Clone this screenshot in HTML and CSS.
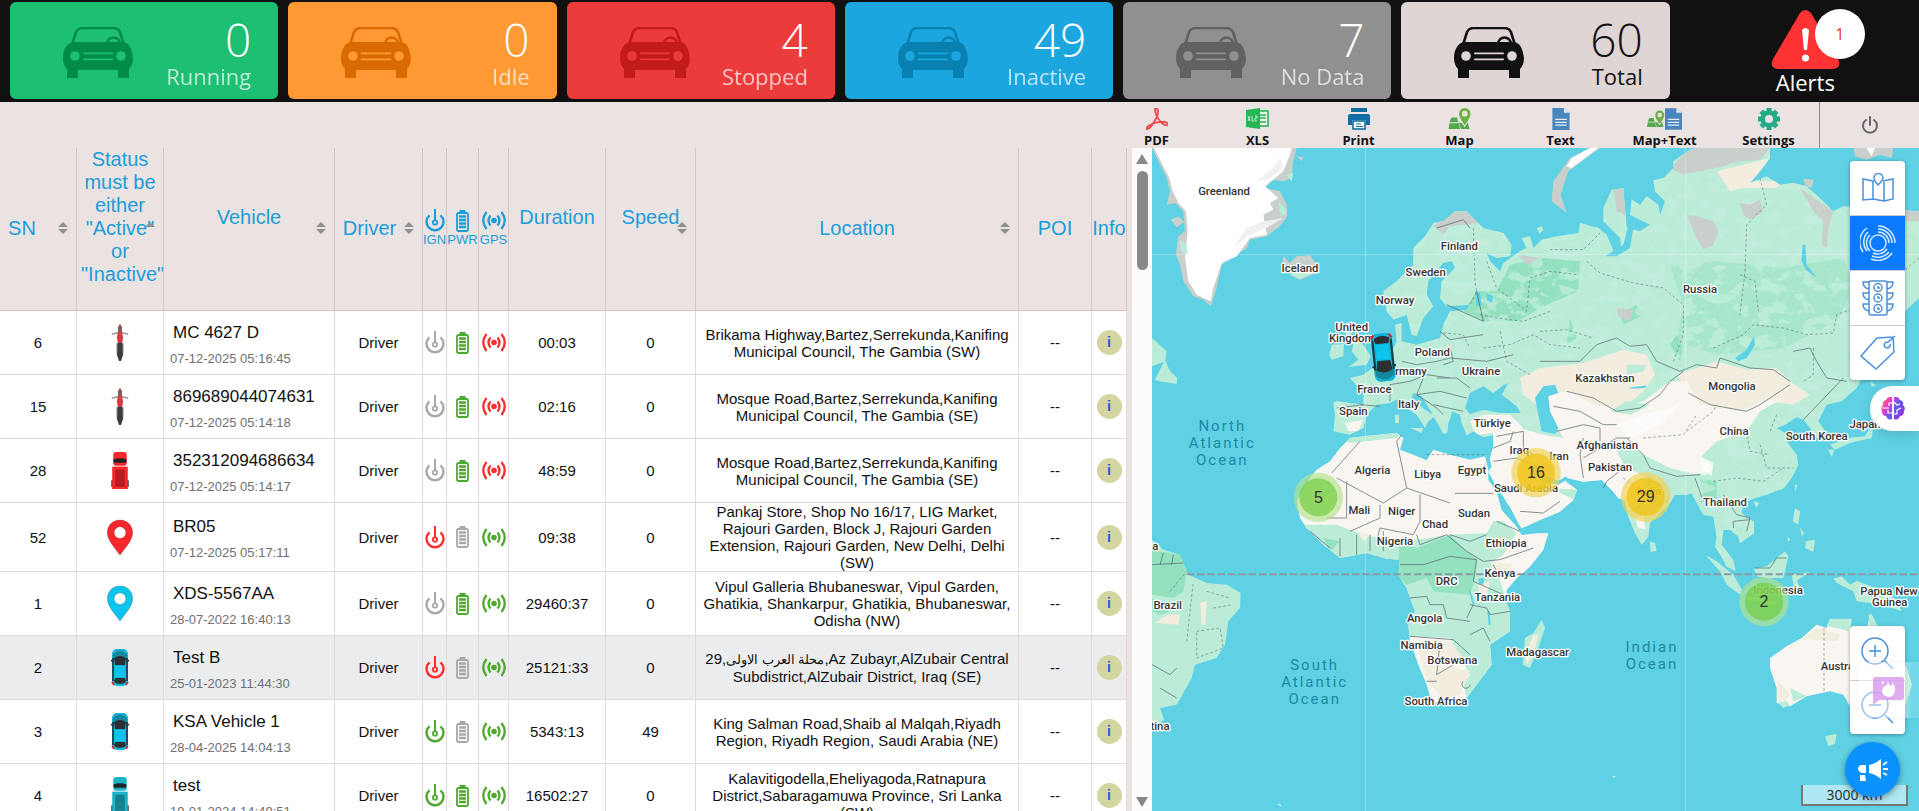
FILE: index.html
```html
<!DOCTYPE html>
<html lang="en">
<head>
<meta charset="utf-8">
<title>Fleet dashboard</title>
<link rel="stylesheet" href="styles.css">
</head>
<body>
<svg class="defs" aria-hidden="true">
  <symbol id="car" viewBox="0 0 70 51">
    <path d="M9 18 13 5Q15 1 20 1H50Q55 1 57 5L61 18" fill="none" stroke="currentColor" stroke-width="2.600"/>
    <path d="M44 17a6.500 6.500 0 0 1 13 0" fill="none" stroke="currentColor" stroke-width="2.400"/>
    <path d="M10 15H60Q65 16 67 20T70 31Q70 38 66 42V51H55V43H15V51H4V42Q0 38 0 31T3 20Q5 16 10 15Z" fill="currentColor"/>
    <g fill="var(--card)"><circle cx="12" cy="29" r="4.800"/><circle cx="58" cy="29" r="4.800"/><rect x="20" y="25.500" width="30" height="1.800" rx=".8"/><rect x="20" y="31.500" width="30" height="1.800" rx=".8"/></g>
  </symbol>
  <symbol id="ign" viewBox="0 0 20 23">
    <path d="M4.500 6.300A8.500 8.500 0 1 0 15.500 6.300" fill="none" stroke="currentColor" stroke-width="2.400"/>
    <path d="M10 0V12" stroke="currentColor" stroke-width="2"/><circle cx="10" cy="13.500" r="2.200" fill="none" stroke="currentColor" stroke-width="1.800"/>
  </symbol>
  <symbol id="pwr" viewBox="0 0 13 22">
    <rect x="3.500" y="0" width="6" height="3" fill="currentColor"/><rect x="1" y="3" width="11" height="18" rx="1.500" fill="none" stroke="currentColor" stroke-width="1.800"/>
    <path d="M3 6.500H10M3 10H10M3 13.500H10M3 17H10" stroke="currentColor" stroke-width="2.400"/>
  </symbol>
  <symbol id="gps" viewBox="0 0 24 19">
    <circle cx="12" cy="9.500" r="2.800" fill="currentColor"/>
    <path d="M8.500 4.500Q4.500 9.500 8.500 14.500M15.500 4.500Q19.500 9.500 15.500 14.500M4.500 1Q-2 9.500 4.500 18M19.500 1Q26 9.500 19.500 18" fill="none" stroke="currentColor" stroke-width="2.300"/>
  </symbol>
  <symbol id="pin" viewBox="0 0 28 38"><path d="M14 1C6 1 1 7 1 14C1 22 9 30 14 37C19 30 27 22 27 14C27 7 22 1 14 1ZM14 8A6 6 0 0 1 14 20A6 6 0 0 1 14 8Z" fill="currentColor" stroke="#0003" fill-rule="evenodd"/></symbol>
  <symbol id="sedan" viewBox="0 0 18 37">
    <rect x="1" y="0" width="16" height="37" rx="5" fill="#12b4d8"/><path d="M2 5Q9-2 16 5V10H2Z" fill="#16879c"/>
    <path d="M0 12 2 11M18 12 16 11M2 9V32M16 9V32" stroke="#1c3a42" stroke-width="1.600"/>
    <path d="M3 9Q9 5 15 9L14 16H4Z" fill="#2c3033"/><rect x="4" y="17" width="10" height="11" fill="#0cc4ee"/><path d="M4 29H14L15 33Q9 37 3 33Z" fill="#2c3033"/>
    <path d="M1 33 3 36M17 33 15 36" stroke="#d22" stroke-width="1.500"/>
  </symbol>
  <symbol id="truck" viewBox="0 0 18 38">
    <rect x="2" y="0" width="14" height="14" rx="3" fill="currentColor"/><path d="M2 8Q9 5 16 8L15 11H3Z" fill="#222"/>
    <path d="M1 29V36M17 29V36" stroke="#444" stroke-width="2"/><rect x="1" y="15" width="16" height="23" fill="currentColor"/><rect x="4" y="18" width="10" height="18" rx="2" fill="#0004"/>
  </symbol>
  <symbol id="moto" viewBox="0 0 18 36">
    <path d="M1 10 9 8 17 10" fill="none" stroke="#999" stroke-width="1.400"/><path d="M9 0Q11 3 11 8L12 13 11 19H7L6 13 7 8Q7 3 9 0Z" fill="#d8393c"/>
    <path d="M7 3 9 0 11 3V8H7Z" fill="#8c5a58"/><path d="M6 19Q9 17 12 19L12 30 10 36H8L6 30Z" fill="#3a3c40"/><path d="M6 20V28M12 20V28" stroke="#999"/>
  </symbol>
  <symbol id="mapico" viewBox="0 0 24 23">
    <path d="M3 10H9L10 15H1ZM1 16H11L12 22H0ZM11 15 14 16 17 20 20 15 22 22H13Z" fill="#55a84c"/>
    <path d="M17 0A6 6 0 0 1 23 6Q23 10 17 18Q11 10 11 6A6 6 0 0 1 17 0ZM17 3A3 3 0 0 0 17 9A3 3 0 0 0 17 3Z" fill="#6cb044" fill-rule="evenodd"/>
  </symbol>
  <symbol id="textico" viewBox="0 0 18 23">
    <path d="M0 0H12L18 5V23H0Z" fill="#4a86bb"/><path d="M12 0V5H18Z" fill="#dfe8f0"/><path d="M3 12H15M3 15H15M3 18H15" stroke="#e6eef5" stroke-width="1.300"/>
  </symbol>
</svg>

<header class="stats">
  <button class="card running"><svg class="car"><use href="#car"/></svg><span class="fig"><b>0</b><span>Running</span></span></button>
  <button class="card idle"><svg class="car"><use href="#car"/></svg><span class="fig"><b>0</b><span>Idle</span></span></button>
  <button class="card stopped"><svg class="car"><use href="#car"/></svg><span class="fig"><b>4</b><span>Stopped</span></span></button>
  <button class="card inactive"><svg class="car"><use href="#car"/></svg><span class="fig"><b>49</b><span>Inactive</span></span></button>
  <button class="card nodata"><svg class="car"><use href="#car"/></svg><span class="fig"><b>7</b><span>No Data</span></span></button>
  <button class="card total"><svg class="car"><use href="#car"/></svg><span class="fig"><b>60</b><span>Total</span></span></button>
  <button class="alerts">
    <span class="alert-icon">
      <svg width="69" height="59" viewBox="0 0 69 59"><path d="M29 3Q34-3 40 3L67 49Q71 58 62 59H7Q-2 58 2 49Z" fill="#f33"/><path d="M31 20Q34 16 38 20L36 40H33Z" fill="#fff"/><circle cx="34.500" cy="48" r="3.500" fill="#fff"/></svg>
      <span class="badge">1</span>
    </span>
    <span>Alerts</span>
  </button>
</header>

<nav class="tools">
  <button><svg width="22" height="22" viewBox="0 0 22 22"><path d="M9 1Q12 0 12 3Q12 8 8 14Q4 21 1 21Q0 19 4 17Q11 13 19 14Q23 15 21 17Q18 18 14 13Q9 7 9 1Z" fill="none" stroke="#f0484a" stroke-width="1.800"/></svg>PDF</button>
  <button><svg width="24" height="22" viewBox="0 0 24 22"><rect x="12" y="3" width="10" height="15" fill="#e9f6ec" stroke="#2bb35a" stroke-width="1.600"/><path d="M14 7H20M14 10H20M14 14H20" stroke="#2bb35a" stroke-width="1.600"/><path d="M0 2 14 0V21L0 19Z" fill="#27b556"/><path d="M2 8 4 13M4 8 2 13M6 8V13H8M9 8H11V10H9V13H11" stroke="#bfe8cc" stroke-width="1" fill="none"/></svg>XLS</button>
  <button><svg width="22" height="22" viewBox="0 0 22 22"><path d="M3 0H19V4H3Z" fill="#0d6fa3"/><path d="M2 6H20Q22 6 22 8V17H18V12H4V17H0V8Q0 6 2 6Z" fill="#0d6fa3"/><rect x="5" y="13" width="12" height="8" fill="#fff" stroke="#0d6fa3" stroke-width="1.600"/><path d="M8 16H13M8 18.500H15" stroke="#0d6fa3"/></svg>Print</button>
  <button><svg width="24" height="22"><use href="#mapico"/></svg>Map</button>
  <button><svg width="18" height="22"><use href="#textico"/></svg>Text</button>
  <button class="wide"><span class="pair"><svg width="18" height="22"><use href="#mapico"/></svg><svg width="17" height="22"><use href="#textico"/></svg></span>Map+Text</button>
  <button><svg width="22" height="22" viewBox="0 0 22 22"><path d="M11 2.500V19.500M2.500 11H19.500M5 5 17 17M17 5 5 17" stroke="#22ab86" stroke-width="5" stroke-linecap="square"/><circle cx="11" cy="11" r="8.500" fill="#22ab86"/><circle cx="11" cy="11" r="4" fill="#ebe3e2"/></svg>Settings</button>
  <button class="power" aria-label="Log out"><svg width="18" height="19" viewBox="0 0 18 19"><path d="M5 4A7 7 0 1 0 13 4" fill="none" stroke="#666" stroke-width="2" stroke-linecap="round"/><path d="M9 1V9" stroke="#666" stroke-width="2" stroke-linecap="round"/></svg></button>
</nav>

<main class="main">
  <section class="list">
    <div class="list-body">
      <table>
        <colgroup><col class="c-sn"><col class="c-status"><col class="c-vehicle"><col class="c-driver"><col class="c-ign"><col class="c-pwr"><col class="c-gps"><col class="c-dur"><col class="c-speed"><col><col class="c-poi"><col class="c-info"></colgroup>
        <thead>
          <tr>
            <th class="sort h-sn">SN</th>
            <th class="sort up raised h-status">Status must be either "Active" or "Inactive"</th>
            <th class="sort raised">Vehicle</th>
            <th class="sort h-driver">Driver</th>
            <th class="mini"><svg class="ign"><use href="#ign"/></svg><span>IGN</span></th>
            <th class="mini"><svg class="pwr"><use href="#pwr"/></svg><span>PWR</span></th>
            <th class="mini"><svg class="gps"><use href="#gps"/></svg><span>GPS</span></th>
            <th class="raised">Duration</th>
            <th class="sort raised">Speed</th>
            <th class="sort">Location</th>
            <th>POI</th>
            <th>Info</th>
          </tr>
        </thead>
        <tbody>
          <tr><td>6</td><td><svg class="veh"><use href="#moto"/></svg></td><td class="name"><b>MC 4627 D</b><small>07-12-2025 05:16:45</small></td><td>Driver</td><td class="off"><svg class="ign"><use href="#ign"/></svg></td><td class="on"><svg class="pwr"><use href="#pwr"/></svg></td><td class="bad"><svg class="gps"><use href="#gps"/></svg></td><td>00:03</td><td>0</td><td>Brikama Highway,Bartez,Serrekunda,Kanifing Municipal Council, The Gambia (SW)</td><td>--</td><td><button class="info">i</button></td></tr>
          <tr><td>15</td><td><svg class="veh"><use href="#moto"/></svg></td><td class="name"><b>869689044074631</b><small>07-12-2025 05:14:18</small></td><td>Driver</td><td class="off"><svg class="ign"><use href="#ign"/></svg></td><td class="on"><svg class="pwr"><use href="#pwr"/></svg></td><td class="bad"><svg class="gps"><use href="#gps"/></svg></td><td>02:16</td><td>0</td><td>Mosque Road,Bartez,Serrekunda,Kanifing Municipal Council, The Gambia (SE)</td><td>--</td><td><button class="info">i</button></td></tr>
          <tr><td>28</td><td class="red"><svg class="veh"><use href="#truck"/></svg></td><td class="name"><b>352312094686634</b><small>07-12-2025 05:14:17</small></td><td>Driver</td><td class="off"><svg class="ign"><use href="#ign"/></svg></td><td class="on"><svg class="pwr"><use href="#pwr"/></svg></td><td class="bad"><svg class="gps"><use href="#gps"/></svg></td><td>48:59</td><td>0</td><td>Mosque Road,Bartez,Serrekunda,Kanifing Municipal Council, The Gambia (SE)</td><td>--</td><td><button class="info">i</button></td></tr>
          <tr><td>52</td><td class="red"><svg class="veh"><use href="#pin"/></svg></td><td class="name"><b>BR05</b><small>07-12-2025 05:17:11</small></td><td>Driver</td><td class="bad"><svg class="ign"><use href="#ign"/></svg></td><td class="off"><svg class="pwr"><use href="#pwr"/></svg></td><td class="on"><svg class="gps"><use href="#gps"/></svg></td><td>09:38</td><td>0</td><td>Pankaj Store, Shop No 16/17, LIG Market, Rajouri Garden, Block J, Rajouri Garden Extension, Rajouri Garden, New Delhi, Delhi (SW)</td><td>--</td><td><button class="info">i</button></td></tr>
          <tr><td>1</td><td class="cyan"><svg class="veh"><use href="#pin"/></svg></td><td class="name"><b>XDS-5567AA</b><small>28-07-2022 16:40:13</small></td><td>Driver</td><td class="off"><svg class="ign"><use href="#ign"/></svg></td><td class="on"><svg class="pwr"><use href="#pwr"/></svg></td><td class="on"><svg class="gps"><use href="#gps"/></svg></td><td>29460:37</td><td>0</td><td>Vipul Galleria Bhubaneswar, Vipul Garden, Ghatikia, Shankarpur, Ghatikia, Bhubaneswar, Odisha (NW)</td><td>--</td><td><button class="info">i</button></td></tr>
          <tr class="hover"><td>2</td><td><svg class="veh"><use href="#sedan"/></svg></td><td class="name"><b>Test B</b><small>25-01-2023 11:44:30</small></td><td>Driver</td><td class="bad"><svg class="ign"><use href="#ign"/></svg></td><td class="off"><svg class="pwr"><use href="#pwr"/></svg></td><td class="on"><svg class="gps"><use href="#gps"/></svg></td><td>25121:33</td><td>0</td><td>29,<bdi class="arabic" lang="ar">محلة العرب الاولى</bdi>,Az Zubayr,AlZubair Central Subdistrict,AlZubair District, Iraq (SE)</td><td>--</td><td><button class="info">i</button></td></tr>
          <tr><td>3</td><td><svg class="veh"><use href="#sedan"/></svg></td><td class="name"><b>KSA Vehicle 1</b><small>28-04-2025 14:04:13</small></td><td>Driver</td><td class="on"><svg class="ign"><use href="#ign"/></svg></td><td class="off"><svg class="pwr"><use href="#pwr"/></svg></td><td class="on"><svg class="gps"><use href="#gps"/></svg></td><td>5343:13</td><td>49</td><td>King Salman Road,Shaib al Malqah,Riyadh Region, Riyadh Region, Saudi Arabia (NE)</td><td>--</td><td><button class="info">i</button></td></tr>
          <tr><td>4</td><td class="teal"><svg class="veh"><use href="#truck"/></svg></td><td class="name"><b>test</b><small>19-01-2024 14:49:51</small></td><td>Driver</td><td class="on"><svg class="ign"><use href="#ign"/></svg></td><td class="on"><svg class="pwr"><use href="#pwr"/></svg></td><td class="on"><svg class="gps"><use href="#gps"/></svg></td><td>16502:27</td><td>0</td><td>Kalavitigodella,Eheliyagoda,Ratnapura District,Sabaragamuwa Province, Sri Lanka (SW)</td><td>--</td><td><button class="info">i</button></td></tr>
        </tbody>
      </table>
    </div>
    <div class="scrollbar"><i class="arrow-up"></i><i class="thumb"></i><i class="arrow-down"></i></div>
  </section>

  <section class="map">
    <svg class="world" viewBox="6 0 2301 1989" preserveAspectRatio="xMidYMid slice">
      <defs>
        <clipPath id="eurasia"><path d="M700 430 740 400 790 350 790 300 825 265 850 225 880 220 915 190 950 190 975 215 1000 240 1060 255 1085 290 1080 325 1040 330 1010 315 1020 340 1050 370 1060 345 1110 310 1130 300 1115 270 1140 265 1150 300 1175 275 1220 265 1285 255 1290 225 1345 240 1370 260 1385 295 1395 320 1415 310 1410 270 1360 220 1360 180 1385 125 1420 120 1425 180 1430 240 1470 250 1500 230 1440 200 1445 155 1470 170 1490 145 1525 170 1530 200 1545 160 1515 130 1510 97 1540 90 1570 60 1570 40 1620 5 1640 0 1860 0 1860 30 1830 70 1800 105 1850 85 1890 110 1930 105 1970 115 2020 160 2050 190 2080 175 2307 190 2307 450 2265 490 2200 540 2130 700 2120 720 2075 760 2030 770 2005 820 2025 850 2000 870 1980 840 1960 815 1940 808 1905 830 1880 840 1915 860 1910 880 1940 920 1945 950 1925 990 1900 1022 1850 1040 1810 1052 1780 1066 1775 1096 1812 1121 1812 1156 1770 1186 1765 1166 1740 1146 1720 1146 1715 1190 1750 1236 1757 1270 1730 1256 1715 1226 1695 1196 1700 1166 1690 1106 1660 1101 1640 1066 1625 1036 1610 1041 1575 1041 1560 1066 1520 1106 1500 1126 1495 1166 1475 1191 1455 1156 1435 1106 1425 1056 1405 1051 1390 1031 1355 996 1300 1001 1255 991 1240 986 1248 1001 1282 1026 1270 1056 1230 1091 1170 1116 1115 1141 1105 1126 1085 1086 1060 1046 1040 1016 1015 971 1025 956 1020 931 1030 896 1030 862 1000 868 970 850 950 862 935 825 930 800 905 800 895 825 892 855 880 858 865 830 840 785 815 745 790 735 785 752 825 785 855 805 835 820 825 840 800 800 765 775 748 750 720 765 680 770 650 800 640 840 600 860 550 850 555 800 550 765 560 760 640 770 640 735 600 690 640 680 680 650 730 600 740 580 735 530 755 525 755 580 800 590 870 570 880 530 900 490 950 485 960 470 890 475 870 450 875 400 915 360 905 340 880 345 835 400 830 440 850 475 820 510 800 565 785 560 770 500 730 515 710 490Z"/></clipPath>
        <clipPath id="africa"><path d="M600 870 640 865 740 855 760 870 750 905 790 920 830 937 850 905 900 920 960 935 1005 925 1015 965 1015 996 1040 1031 1055 1086 1100 1136 1115 1161 1160 1156 1195 1156 1180 1206 1140 1256 1100 1291 1070 1326 1070 1366 1080 1390 1080 1450 1020 1490 1025 1550 995 1590 950 1650 900 1670 845 1662 830 1610 805 1550 780 1480 775 1430 795 1390 770 1320 745 1280 750 1235 710 1232 650 1215 570 1230 520 1190 470 1140 450 1110 440 1060 480 990 500 965 540 940 570 900Z"/></clipPath>
        <filter id="mottle" x="0" y="0" width="100%" height="100%"><feTurbulence type="fractalNoise" baseFrequency=".022 .03" numOctaves="3" seed="8"/><feColorMatrix values="0 0 0 0 .55  0 0 0 0 .87  0 0 0 0 .73  9 0 0 0 -4.600"/></filter>
      </defs>
      <rect x="6" width="2301" height="1989" fill="#5fd1e5"/>
      <!-- Arctic islands -->
      <path class="grey" d="M6 0 50 90 60 130 50 170 75 165 100 190 105 250 85 265 78 320 90 350 100 400 130 445 160 455 183 475 200 420 215 350 290 300 300 275 350 265 390 235 412 205 410 170 390 130 345 120 370 95 400 100 425 90 430 40 440 0Z"/>
      <path class="snow" d="M12 0 58 90 68 130 85 165 108 190 113 250 105 330 115 400 140 440 182 460 190 420 215 345 260 325 300 270 350 260 340 200 370 185 360 165 385 150 345 115 400 70 420 20 425 0Z"/>
      <path class="green" d="M90 275 110 290 112 320 92 310ZM385 160 410 185 405 205 388 190ZM410 80 430 75 425 100Z"/>
      <path class="shade" d="M320 100 370 60 390 30 400 60 360 90ZM250 300 300 260 350 240 400 210 340 220 290 240Z"/>
      <path class="grey" d="M62 215 85 205 102 222 80 238ZM400 325 420 345 440 325 480 322 505 355 500 375 450 395 420 380 430 365 395 355ZM1320 0 1260 30 1210 100 1205 160 1250 195 1232 140 1255 70 1350 0ZM2110 0H2230L2225 30 2190 20 2150 35 2115 25ZM1960 92 1992 95 1985 120 1965 112ZM440 25l20 3-5 12Z"/>
      <path class="snow" d="M1320 0 1265 30 1250 55 1265 60 1345 0ZM2150 0 2165 25 2175 0Z"/>
      <path class="green" d="M430 370 500 372 450 393 420 380ZM1335 235l18 10-8 8ZM1160 240l15-5 5 12-12 10Z"/>
      <!-- Europe and Asia -->
      <g clip-path="url(#eurasia)">
        <rect class="green" width="2307" height="1300"/>
        <path class="deep" d="M1080 350 1180 330 1290 340 1285 430 1190 470 1100 520 1000 520 940 490 980 430 1040 430ZM1580 560 1600 600 1590 640 1560 590ZM1260 510 1280 570 1250 590ZM1410 500 1460 470 1480 500 1420 530ZM1650 990 1700 1000 1700 1060 1660 1050Z"/>
        <path class="deep" opacity=".45" d="M1560 350 1700 340 1900 360 2080 330 2110 420 2060 520 1900 600 1700 620 1580 580 1600 470Z"/>
        <rect width="2307" height="1300" filter="url(#mottle)" opacity=".7"/>
        <path class="grey" d="M1560 60 1620 0H1860L1830 35 1760 40 1720 55 1600 80ZM1610 200 1640 205 1690 220 1705 250 1690 290 1660 305 1640 270ZM1390 120 1425 120 1425 200 1400 190ZM1770 165 1800 170 1830 155 1840 190 1800 215 1780 200ZM1950 120 1990 150 2050 190 2035 240 2030 300 2015 290 2020 220 1990 190ZM2100 170 2307 190 2307 220 2120 220ZM1400 480 1450 485 1440 520 1405 505ZM1105 320 1170 330 1130 350ZM850 235 915 190 950 190 990 225 900 235 880 260Z"/>
        <path class="tan" d="M1700 70 1860 30 1820 100 1900 100 1880 120 1780 120 1740 130ZM1110 690 1170 660 1300 645 1420 605 1490 620 1515 680 1480 730 1420 780 1300 800 1200 800 1120 740ZM1580 680 1700 640 1790 665 1880 660 1920 700 1980 740 1930 770 1850 760 1770 790 1650 780Z"/>
        <path class="sand" d="M1190 740 1260 730 1330 770 1400 780 1480 760 1560 700 1610 700 1650 770 1770 790 1840 760 1900 750 1830 790 1790 850 1700 880 1650 930 1690 960 1660 985 1560 960 1480 920 1430 880 1400 900 1420 950 1480 985 1500 1050 1440 1090 1350 1030 1200 1020 1280 1060 1100 1180 1000 960 1030 855 1110 840 1180 860 1240 870 1200 800ZM960 820 1000 800 1080 800 1120 840 980 862ZM585 825 640 815 625 850 595 850ZM1455 1110 1480 1100 1485 1145 1465 1140Z"/>
        <path class="snow" d="M1650 925 1690 945 1685 985 1655 965ZM1400 830 1480 800 1560 780 1600 760 1530 830 1440 870Z" opacity=".7"/>
        <path class="green" d="M1400 905 1430 940 1550 990 1650 975 1680 990 1600 1000 1500 985 1410 930ZM1380 790 1430 760 1500 770 1440 800ZM1430 650 1490 650 1480 670 1430 680ZM1980 590 2000 630 1950 700 1930 640Z"/>
      </g>
      <g class="sea">
        <path d="M945 780 960 735 1000 715 1030 735 1060 712 1075 705 1055 740 1100 775 1112 795 1050 795 1000 785 960 798Z"/>
        <path d="M1155 750 1180 715 1215 710 1225 735 1195 745 1200 790 1225 840 1215 858 1175 850 1165 800Z"/>
        <path d="M1755 630 1790 605 1812 565 1815 590 1790 630 1765 640Z"/>
        <path d="M1158 950 1190 985 1225 998 1250 985 1252 994 1225 1010 1180 1005 1140 960Z"/>
        <path d="M905 790 930 800 935 850 912 850 905 820ZM1365 325 1420 290 1435 230 1450 240 1440 300 1400 325ZM1435 720 1490 712 1485 720 1445 722ZM975 430l15 5 5 35-15 5ZM1010 435l20 10-5 20-15-10ZM1958 290l8 0 4 60 30 38-30-20-16-30Z"/>
      </g>
      <!-- British Isles and small European islands -->
      <path class="green" d="M605 520 615 545 600 560 640 590 662 625 650 650 595 657 625 635 605 610 610 590 590 570 580 530ZM545 590 582 588 580 625 545 635 538 620ZM735 800h12v25h-12ZM780 840 820 840 815 855ZM6 570 50 610 45 640 6 655ZM15 695 45 635 60 670 82 690 80 708 30 700Z"/>
      <!-- Africa -->
      <g clip-path="url(#africa)">
        <rect class="sand" x="430" y="840" width="800" height="840"/>
        <path class="green" d="M460 1130 560 1130 650 1165 800 1175 900 1160 1010 1155 1030 1120 1060 1120 1100 1156 1060 1220 1030 1240 1060 1330 1080 1390 1080 1450 1020 1490 1025 1550 995 1590 950 1650 940 1610 960 1580 920 1510 900 1470 780 1465 740 1400 740 1250 440 1250ZM540 855 760 850 740 870 600 885Z"/>
        <path class="deep" d="M750 1180 800 1200 900 1160 950 1210 980 1230 975 1290 960 1340 850 1330 830 1290 770 1310 740 1280ZM520 1170 570 1180 540 1210Z"/>
        <path class="tan" d="M800 1480 900 1480 940 1530 880 1550 960 1570 930 1640 880 1650 830 1600ZM620 1150 660 1160 640 1180ZM1020 1240 1090 1250 1040 1290ZM985 1310 1020 1300 1010 1340 985 1345Z"/>
      </g>
      <path class="sea" d="M985 1292 1003 1290 1000 1310 988 1308ZM958 1330l4 0 12 40-6 0ZM1012 1390l6 0 4 42-6 0Z"/>
      <!-- South America, Madagascar, Oceania -->
      <path class="green" d="M6 1175 40 1205 90 1220 115 1280 170 1305 230 1310 272 1335 270 1380 235 1420 225 1490 200 1530 135 1550 125 1590 80 1670 30 1680 42 1715 30 1725 6 1735ZM1175 1415 1185 1440 1165 1500 1140 1560 1118 1550 1125 1470 1150 1455ZM2025 1765l10 30 20-8 5-30Z"/>
      <path class="deep" d="M6 1205 90 1220 110 1270 100 1330 70 1350 6 1340ZM6 1350 60 1390 30 1400 6 1390Z"/>
      <path class="tan" d="M1150 1460 1165 1460 1150 1520 1130 1550 1125 1520ZM15 1425 50 1400 90 1400 85 1430ZM150 1365 170 1360 165 1430 155 1430Z"/>
      <path class="green" d="M1665 1220 1700 1240 1750 1280 1776 1325 1770 1340 1730 1310 1710 1270ZM1812 1262 1850 1255 1905 1210 1915 1225 1900 1290 1850 1290 1820 1285ZM1790 1345 1880 1362 1870 1370 1795 1355ZM1925 1280 1980 1272 1940 1298 1955 1330 1935 1335ZM2050 1292 2075 1285 2100 1310 2120 1298 2190 1325 2240 1355 2255 1390 2200 1370 2120 1360 2110 1330 2060 1305ZM1935 1080 1950 1090 1945 1130 1928 1120ZM1968 1180 1995 1175 1990 1212 1965 1200ZM1950 1140l12 15-6 12ZM1912 1165l10 10-8 5ZM1935 1010 1942 1012 1936 1032ZM1810 1060l18 5-8 14ZM1500 1180 1515 1185 1520 1208 1502 1212ZM2040 890 2090 870 2145 865 2165 830 2160 790 2175 800 2165 870 2100 885 2055 905ZM2035 905l18 0-8 22ZM2160 700 2178 712 2165 716ZM380 1968l10-2 6 12ZM1385 1884l14 0-6 6Z"/>
      <path class="sand" d="M1955 1470 2000 1430 2030 1440 2040 1415 2105 1415 2100 1440 2145 1470 2160 1400 2180 1430 2230 1510 2270 1560 2285 1610 2250 1720 2170 1710 2100 1675 2080 1640 2040 1630 1970 1645 1920 1675 1880 1665 1880 1620 1860 1560 1860 1530 1910 1495Z"/>
      <path class="green" d="M2030 1435 2040 1412 2105 1412 2095 1450 2060 1440ZM2155 1400 2165 1398 2190 1450 2160 1440ZM1885 1665 1900 1650 1920 1672 1900 1680ZM1920 1620 1970 1645 1930 1660ZM2265 1550 2285 1610 2250 1720 2262 1610Z"/>
      <path class="tan" d="M1955 1475 2000 1440 2070 1460 2060 1480 1990 1475ZM1885 1600 1920 1640 1900 1665 1880 1650Z"/>
      <!-- Borders -->
      <g class="dashed">
        <path d="M970 240 975 400 980 430 960 470M1010 340 1040 420 1080 450 1130 490 1140 390 1200 370 1285 380M1200 305 1300 305 1350 255M1310 340 1350 375 1450 405 1540 420 1600 470 1600 560 1570 640M1830 90 1850 170 1790 230 1785 370 1770 500M1770 380 1815 400 1825 490M1690 600 1780 560 1810 530 1900 540 1970 560 2050 555 2060 500 2140 470 2307 330M1170 550 1250 545 1330 570M1610 850 1690 790 1700 770M1990 600 1990 680 1960 700M1830 890 1850 960 1930 960M1790 850 1800 910 1860 920M1880 800 1860 850M1480 870 1600 860 1640 800M990 500 1040 510 1120 520 1200 490M1000 600 1080 590 1150 560 1200 590 1290 600M1050 550 1070 640 1140 680M880 555 940 560 960 600M1690 1000 1760 990 1840 1000 1900 960M1420 990 1500 1050 1440 1090M1460 1090 1550 1060M830 920 1010 920M110 1480 130 1300M60 1330 110 1270M140 1450 210 1440 220 1500 140 1530ZM170 1330 240 1350M190 1380 250 1370M2022 1440V1630"/>
      </g>
      <g class="border">
        <path d="M860 240 940 215 960 240M890 470 1000 520 980 430M870 550 900 575 1000 560M900 600 910 640 880 650M755 640 800 650 860 640 900 630 1010 640 1090 620M860 690 920 690 960 720M720 710 780 700 830 680 900 690M800 740 870 730 950 750M850 770 940 790M820 690 800 740 860 780 880 800M1170 640 1290 640 1340 590 1400 570 1440 595 1490 590 1520 640 1590 670 1640 650 1700 660 1710 630 1800 660 1870 665 1920 700M1600 670 1560 700 1530 740M1615 735 1680 770 1790 790 1830 770 1920 710M1930 610 1980 600 2000 640 2030 690 2090 700M1960 815 2080 690M1210 775 1290 790 1360 830 1400 830M1250 730 1330 750 1400 790 1470 780 1530 740M1220 850 1300 830 1350 840 1350 880M1300 870 1290 920 1300 990M1300 930 1400 870 1440 870M1430 870 1480 920 1500 960 1580 985 1650 980M1360 1020 1370 1000 1420 960M1635 990 1660 1060M1040 865 1120 850 1120 900 1150 920M1030 900 1080 880 1090 850M1030 940 1100 930 1200 970M1110 1090 1180 1095 1230 1060M640 770 560 780M630 770 690 775M720 710 720 760"/>
        <path d="M545 975 630 880M560 990 700 1065 770 1020 740 880 755 860M770 1020 900 1065M915 1036H1030M690 1070 690 1110 600 1150M530 1110H590V1000M810 1040 810 1120 790 1160 690 1140 680 1180M800 1160 810 1190 890 1160 950 1210 1000 1240 1050 1235 1150 1200M750 1250 820 1250 900 1225 980 1235 970 1300 1060 1340M1030 1250 1050 1290M900 1160 960 1180 1010 1160M1040 1120 1110 1150M570 1170 570 1225M620 1160 620 1220M660 1160 660 1210M700 1150 700 1210M480 1150 540 1200M780 1350 830 1345 840 1370 880 1370 890 1410 960 1420M960 1370 1010 1380 1020 1400 1080 1390M780 1465 910 1475 960 1520M960 1460 1000 1440 1020 1480M870 1480 860 1580 910 1550M830 1600 860 1600M970 1370 950 1410M6 1250 100 1245M40 1215 30 1250M70 1220 65 1250M6 1550 60 1580 80 1560M30 1620 80 1650M1720 1040 1760 1100 1800 1110 1790 1150M1750 1140 1750 1120 1800 1115M1815 1260 1860 1260 1880 1230 1910 1230M940 1600a12 12 0 1 0 20 10"/>
      </g>
      <path d="M646 0V1989M1606 0V1989M6 320H2307" stroke="#fff" stroke-opacity=".3" stroke-width="3"/>
      <path d="M110 1279H2307" stroke="#8b9aa8" stroke-width="6" stroke-dasharray="22 9"/>
      <g class="ocean">
        <text x="217" y="849">North</text><text x="217" y="901">Atlantic</text><text x="217" y="951">Ocean</text>
        <text x="494" y="1565">South</text><text x="494" y="1617">Atlantic</text><text x="494" y="1667">Ocean</text>
        <text x="1506" y="1513">Indian</text><text x="1506" y="1563">Ocean</text>
      </g>
      <g class="country">
        <text x="222" y="140">Greenland</text><text x="450" y="373">Iceland</text><text x="928" y="305">Finland</text><text x="827" y="384">Sweden</text><text x="735" y="467">Norway</text><text x="605" y="549">United</text><text x="605" y="583">Kingdom</text><text x="847" y="624">Poland</text><text x="762" y="680">Germany</text><text x="993" y="680">Ukraine</text><text x="673" y="736">France</text><text x="776" y="779">Italy</text><text x="610" y="801">Spain</text><text x="1027" y="838">Türkiye</text><text x="1108" y="917">Iraq</text><text x="667" y="977">Algeria</text><text x="833" y="990">Libya</text><text x="966" y="977">Egypt</text>
        <text x="1650" y="436">Russia</text><text x="1365" y="703">Kazakhstan</text><text x="1746" y="726">Mongolia</text><text x="1752" y="861">China</text><text x="2000" y="875">South Korea</text><text x="2145" y="839">Japan</text><text x="1372" y="902">Afghanistan</text><text x="1227" y="936">Iran</text><text x="1380" y="969">Pakistan</text><text x="1128" y="1032">Saudi Arabia</text><text x="1497" y="1040">India</text><text x="1725" y="1074">Thailand</text><text x="1884" y="1337">Indonesia</text><text x="2217" y="1341">Papua New</text><text x="2219" y="1375">Guinea</text><text x="2080" y="1566">Australia</text>
        <text x="628" y="1098">Mali</text><text x="755" y="1101">Niger</text><text x="855" y="1141">Chad</text><text x="972" y="1107">Sudan</text><text x="735" y="1190">Nigeria</text><text x="1068" y="1198">Ethiopia</text><text x="1050" y="1288">Kenya</text><text x="890" y="1310">DRC</text><text x="1042" y="1359">Tanzania</text><text x="824" y="1423">Angola</text><text x="815" y="1502">Namibia</text><text x="907" y="1547">Botswana</text><text x="858" y="1671">South Africa</text><text x="1163" y="1525">Madagascar</text><text x="53" y="1382">Brazil</text><text x="16" y="1207">a</text><text x="30" y="1746">tina</text>
      </g>
      <use href="#sedan" x="-36" y="-73" width="72" height="146" transform="translate(700 628) rotate(174)"/>
      <g class="cluster green-c"><circle cx="505" cy="1048" r="74"/><circle cx="505" cy="1048" r="57"/><text x="505" y="1064">5</text></g>
      <g class="cluster green-c"><circle cx="1842" cy="1361" r="74"/><circle cx="1842" cy="1361" r="57"/><text x="1842" y="1377">2</text></g>
      <g class="cluster yellow-c"><circle cx="1158" cy="974" r="74"/><circle cx="1158" cy="974" r="57"/><text x="1158" y="990">16</text></g>
      <g class="cluster yellow-c"><circle cx="1487" cy="1047" r="74"/><circle cx="1487" cy="1047" r="57"/><text x="1487" y="1063">29</text></g>
    </svg>

    <div class="panel layers">
      <button aria-label="Map type"><svg width="32" height="30" viewBox="0 0 32 30"><path d="M12 9 11 8 1 6V27L11 26 22 28 31 26V6L21 8M11 9V26M22 9V28M16 12Q12 7 12 5A4.500 4.500 0 0 1 21 5Q21 7 16 12Z"/></svg></button>
      <button class="active" aria-label="Clusters"><svg width="36" height="36" viewBox="0 0 36 36"><circle cx="18" cy="18" r="8"/><path d="M18 7A11 11 0 0 1 29 18M18 4A14 14 0 0 1 32 18M18 1A17 17 0 0 1 35 18M10 26A11 11 0 0 1 10 10M7 26A14 14 0 0 1 8 7M3 27A17 17 0 0 1 7 3M27 24A11 11 0 0 1 13 28M29 27A14 14 0 0 1 12 31M32 28A17 17 0 0 1 11 34"/></svg></button>
      <button aria-label="Traffic"><svg width="32" height="36" viewBox="0 0 32 36"><rect x="7" y="1" width="18" height="34" rx="2"/><circle cx="16" cy="7.500" r="4"/><circle cx="16" cy="18" r="4"/><circle cx="16" cy="28.500" r="4"/><path d="M7 2H1Q1 8 7 9M25 2H31Q31 8 25 9M7 13H1Q1 19 7 20M25 13H31Q31 19 25 20M7 24H1Q1 30 7 31M25 24H31Q31 30 25 31M16 6V8H18M16 16V18H18M16 27V29H18"/></svg></button>
      <button aria-label="Labels"><svg width="36" height="36" viewBox="0 0 36 36"><path d="M1 21 17 3 33 2 34 17 16 34ZM27 8 35 1M30 9A3 3 0 1 1 27 7"/></svg></button>
    </div>
    <button class="brain" aria-label="Assistant"><svg width="24" height="23" viewBox="0 0 24 23"><defs><linearGradient id="bg" x2="1" y2=".6"><stop stop-color="#ff8a1f"/><stop offset=".35" stop-color="#e83bd0"/><stop offset=".7" stop-color="#5b5cf0"/><stop offset="1" stop-color="#9b2fe0"/></linearGradient></defs><path d="M11 0Q7-1 5 3Q1 4 2 8Q-1 11 1 14Q1 19 5 19Q7 24 11 22ZM13 0Q17-1 19 3Q23 4 22 8Q25 11 23 14Q23 19 19 19Q17 24 13 22Z" fill="url(#bg)"/><path d="M11 6H8V9M1 11H8M11 16H7V13M13 5 16 8 19 7M13 17H16V13L20 11" stroke="#fff" fill="none" stroke-width="1.200"/></svg></button>
    <div class="panel zoom">
      <button aria-label="Zoom in"><svg width="33" height="33" viewBox="0 0 33 33"><circle cx="14" cy="14" r="13"/><path d="M14 8V20M8 14H20M24 24 32 32"/></svg></button>
      <button aria-label="Zoom out"><svg width="33" height="33" viewBox="0 0 33 33"><circle cx="14" cy="14" r="13"/><path d="M8 14H20M24 24 32 32"/></svg></button>
    </div>
    <div class="chat"><svg width="31" height="28" viewBox="0 0 31 28"><path d="M2 0H29Q31 0 31 2V21Q31 23 29 23H6L0 28V2Q0 0 2 0Z" fill="#dc9df0"/><path d="M15 3Q15 7 18 9Q20 8 19 5Q23 10 22 14Q21 20 15 20Q9 19 9 14Q10 9 13 9Q15 7 15 3ZM8 5 11 4 10 8Z" fill="#fff"/></svg></div>
    <div class="scale">3000 km</div>
    <button class="announce" aria-label="Announcements"><svg width="30" height="24" viewBox="0 0 30 24"><path d="M0 10Q1 7 4 7H8V15H4Q0 14 0 10ZM11 7Q17 6 23 1V21Q17 16 11 15ZM2 17H7L8 23H2Z" fill="#fff"/><path d="M25 7 29 4M25 11H30M25 15 29 17" stroke="#fff" stroke-width="1.800"/></svg></button>
  </section>
</main>
</body>
</html>
```
FILE: styles.css
```css
*{box-sizing:border-box}
body{margin:0;height:100vh;display:flex;flex-direction:column;overflow:hidden;background:#ebe3e2;color:#111;font-family:"Liberation Sans",Arial,sans-serif}
button{border:0;padding:0;background:none;font:inherit;color:inherit;cursor:pointer}
.defs{position:absolute;width:0;height:0}

.stats{display:grid;grid-template-columns:repeat(6,268fr) 239fr;gap:10px;padding:2px 0 3px 10px;background:#111;font-family:"Open Sans","Noto Sans",sans-serif}
.card{display:flex;justify-content:space-between;align-items:center;height:97px;padding:0 27px 0 53px;border-radius:6px;background:var(--card);color:var(--ink)}
.car{width:70px;height:51px;margin-top:4px}
.fig{display:flex;flex-direction:column;align-items:flex-end;color:#fff}
.fig b{font-size:46px;font-weight:300;line-height:50px}
.fig span{font-size:22px;line-height:24px;opacity:.7}
.running{--card:#1dbf73;--ink:#008c46}
.idle{--card:#ff9933;--ink:#d96a00}
.stopped{--card:#ec3b3b;--ink:#c31a1a}
.inactive{--card:#1ba6df;--ink:#0881b0}
.nodata{--card:#909090;--ink:#616161}
.total{--card:#dfd5d4;--ink:#111}
.total .fig{color:#111}
.total .fig span{opacity:1}
.alerts{display:flex;flex-direction:column;align-items:center;padding:8px 0 0 12px;color:#fff;font-size:22px;line-height:26px}
.alert-icon{position:relative;display:flex}
.badge{position:absolute;left:44px;top:-1px;width:50px;height:50px;border-radius:50%;background:#fff;color:#e33;font-size:16px;line-height:50px;text-align:center}

.tools{display:flex;justify-content:flex-end;height:46px;font:bold 13px/16px "Open Sans","Noto Sans",sans-serif}
.tools button{display:flex;flex-direction:column;align-items:center;justify-content:flex-end;gap:2px;width:101px}
.pair{display:flex}
.tools .wide{width:107px}
.tools .power{width:100px;justify-content:center;border-left:1px solid #8a8a8a}

.main{flex:1;min-height:0;display:grid;grid-template-columns:1152fr 767fr}
.list{display:flex;min-width:0;overflow:hidden}
.list-body{flex:1;min-width:0;padding-right:5px;overflow:hidden}
table{width:100%;table-layout:fixed;border-collapse:separate;border-spacing:0;font-size:15px;line-height:17px;text-align:center}
.c-sn{width:77px}.c-status{width:87px}.c-vehicle{width:171px}.c-driver{width:88px}.c-ign{width:24px}.c-pwr{width:32px}.c-gps{width:30px}.c-dur{width:97px}.c-speed{width:90px}.c-poi{width:73px}.c-info{width:35px}
th{position:relative;height:162px;padding:0 0 2px;border-right:1px solid #d9c3c5;border-bottom:1px solid #d9bfc1;color:#1b9ddb;font-size:20px;font-weight:400;line-height:23px;overflow:hidden}
th.raised{padding-bottom:24px}
th.h-status{padding:0 4px 24px}
th.h-sn{padding-right:32px}
th.h-driver{padding-right:18px}
th.mini{font-size:13px;line-height:15px;overflow:visible}
.mini svg{display:block;margin:0 auto}
.sort::before,.sort::after{content:"";position:absolute;right:8px;border:5px solid transparent}
.sort::before{top:69px;border-bottom-color:#8f8f8f}
.sort::after{top:81px;border-top-color:#8f8f8f}
.sort.up::after{display:none}
td{height:64px;padding:0 4px;border-right:1px solid #e6d8da;border-bottom:1px solid #e6d8da;background:#fff}
td svg{display:block;margin:0 auto}
.hover td{background:#ebecee}
td:nth-child(n+5):nth-child(-n+7){padding:0}
td:nth-child(12){padding:0}
.arabic{font-size:13px}
.name{text-align:left;padding:6px 0 0 6px}
.name b{display:block;padding-left:3px;font-size:17px;font-weight:400;line-height:26px}
.name small{display:block;color:#707070;font-size:13px;line-height:26px}
.ign{width:20px;height:23px}
.pwr{width:13px;height:22px}
.gps{width:24px;height:19px}
.mini .gps{height:23px}
.veh{width:28px;height:37px}
.off{color:#a8a8a8}.on{color:#4ea72e}.bad{color:#ff2d2d}
.red{color:#f7282c}.cyan{color:#0cc4ee}.teal{color:#1fb3c8}
.info{width:25px;height:25px;border-radius:50%;background:#d3d6a0;color:#2c57e0;font-size:14px;font-weight:700}
.scrollbar{display:flex;flex-direction:column;align-items:center;width:20px;padding:6px 0 4px;background:#fcfcfc}
.arrow-up,.arrow-down{border:6px solid transparent}
.arrow-up{border-top:0;border-bottom:10px solid #888}
.arrow-down{margin-top:auto;border-bottom:0;border-top:10px solid #888}
.thumb{width:11px;height:99px;margin-top:7px;border-radius:6px;background:#888}

.map{position:relative;overflow:hidden;min-width:0}
.world{display:block;width:100%;height:100%}
.green{fill:#bbecd8}.deep{fill:#93e1bf}.sand{fill:#f9f5f0}.tan{fill:#f3eddf}.grey{fill:#c9cfca}.snow{fill:#fff}.shade{fill:#f0f0f0}.sea{fill:#5fd1e5}
.dashed,.border{fill:none;stroke:#56646a;stroke-width:3;stroke-linejoin:round;opacity:.7}
.dashed{stroke-dasharray:8 7;opacity:.55}
.country{font:500 34px Roboto,sans-serif;text-anchor:middle;fill:#333;stroke:#fff;stroke-width:8px;stroke-linejoin:round;paint-order:stroke}
.ocean{font:400 45px Roboto,sans-serif;letter-spacing:6px;text-anchor:middle;fill:#1b8aa3}
.cluster text{font:48px "Liberation Sans",Arial,sans-serif;text-anchor:middle;fill:#333}
.green-c circle{fill:#b5e28c;fill-opacity:.65}
.green-c circle+circle{fill:#6ecc39}
.yellow-c circle{fill:#f1d357;fill-opacity:.7}
.yellow-c circle+circle{fill:#f0c20c}
.panel{position:absolute;right:14px;width:55px;border-radius:4px;background:#fff;box-shadow:0 1px 4px #0005;overflow:hidden}
.panel button{display:grid;place-items:center;width:100%;height:54px}
.panel button+button{border-top:1px solid #ccc}
.panel svg{fill:none;stroke:#4a90d9;stroke-width:1.500}
.layers{top:13px}
.layers button+button{height:55px}
.panel .active{background:#0a7bff}
.panel .active svg{stroke:#d6e9ff}
.zoom{bottom:77px}
.brain{position:absolute;right:0;top:238px;display:grid;place-items:center;width:49px;height:45px;padding-right:4px;border-radius:23px 0 0 23px;background:#fff;box-shadow:0 4px 12px #0002}
.chat{position:absolute;right:0;bottom:93px;width:61px;height:56px;padding:15px 0 0 15px;border-radius:6px 0 0 6px;background:linear-gradient(90deg,#ffffff73 46px,#ffffff1f 54px);box-shadow:0 0 4px #0001}
.chat svg{display:block;opacity:.85}
.scale{position:absolute;right:11px;bottom:5px;width:107px;border:2px solid #777;border-top:0;background:#ffffff80;color:#333;font:14px/19px "Noto Sans",sans-serif;text-align:center}
.announce{position:absolute;right:19px;bottom:14px;display:grid;place-items:center;width:55px;height:55px;border-radius:50%;background:#0a93ff;box-shadow:0 2px 6px #0006}
```
